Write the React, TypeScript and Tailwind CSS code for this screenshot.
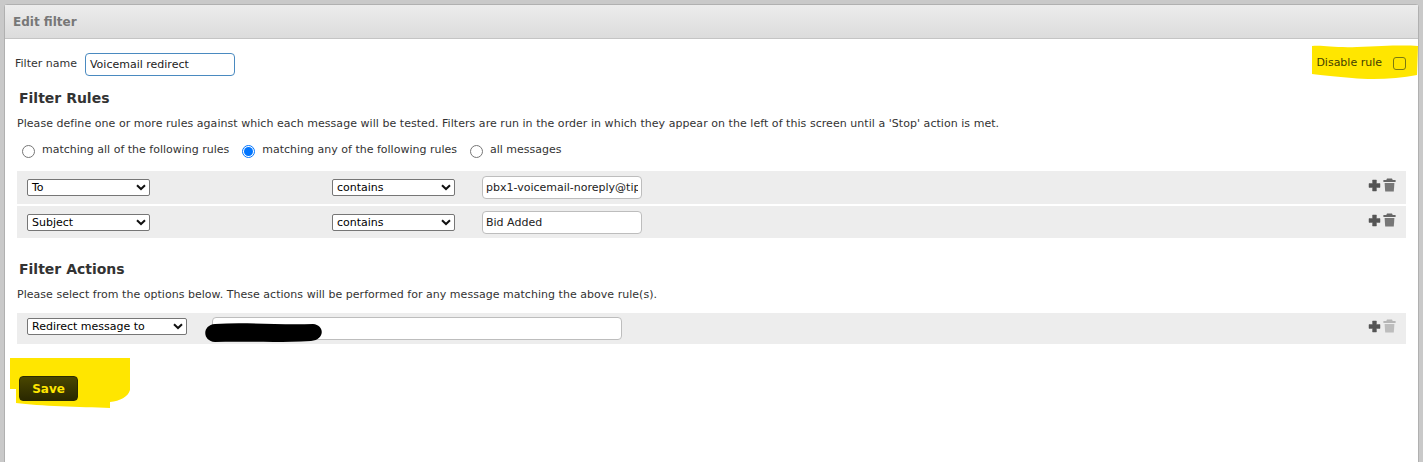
const font = { fontFamily: '"DejaVu Sans", Verdana, sans-serif' };

function Select({ value, width }: { value: string; width: string }) {
  return (
    <div className={`flex h-[17px] items-center justify-between rounded-[2px] border border-[#767676] bg-white pl-[4px] pr-[3px] text-[11px] leading-none text-black ${width}`}>
      <span>{value}</span>
      <svg width="10" height="7" viewBox="0 0 10 7">
        <path d="M1 1.2 L5 5 L9 1.2" fill="none" stroke="#111" strokeWidth="2" />
      </svg>
    </div>
  );
}

function TextBox({ value, width }: { value?: string; width: string }) {
  return (
    <div className={`flex h-[23px] items-center rounded-[4px] border border-[#bdbdbd] bg-white pl-[3px] pr-[3px] pt-[2px] text-[11px] text-[#222] ${width}`}>
      <span className="block w-full overflow-hidden whitespace-nowrap">{value}</span>
    </div>
  );
}

function RowIcons({ faded }: { faded?: boolean }) {
  return (
    <div className="-mt-[5px] flex items-end">
      <svg width="13" height="13" viewBox="0 0 13 13">
        <path d="M4.6 1h3.8v3.6H12v3.8H8.4V12H4.6V8.4H1V4.6h3.6z" fill="#555" stroke="#555" strokeWidth="0.5" strokeLinejoin="round" />
      </svg>
      <svg width="13" height="14" viewBox="0 0 13 14" className={faded ? "ml-[2px] opacity-40" : "ml-[2px]"}>
        <path d="M4 0.5h5l.7 1.6H12.6v1.8H.4V2.1h2.9z" fill="#666" />
        <path d="M1.6 5h9.8l-.6 8.6H2.2z" fill="#777" />
      </svg>
    </div>
  );
}

function Radio({ checked }: { checked?: boolean }) {
  return (
    <span className={`mt-[3px] flex h-[13px] w-[13px] items-center justify-center rounded-full border bg-white ${checked ? "border-[#0075ff]" : "border-[#767676]"}`}>
      {checked && <span className="h-[9px] w-[9px] rounded-full bg-[#0075ff]" />}
    </span>
  );
}

export default function App() {
  return (
    <div className="h-[462px] overflow-hidden bg-[#c9c9c9] px-[4px] pt-[4px]" style={font}>
      <div className="relative h-[470px] rounded-t-[3px] border border-[#b0b0b0] bg-white">
        <div className="flex h-[34px] items-center border-b border-[#c4c4c4] bg-gradient-to-b from-[#ececec] to-[#dcdcdc] pl-[8px] text-[12px] font-bold text-[#777]">
          Edit filter
        </div>

        {/* marker highlights from the screenshot */}
        <svg className="absolute left-[1307px] top-[40px]" width="106" height="36" viewBox="0 0 106 36">
          <path d="M0 1 C 12 0, 22 3, 45 2 C 70 1, 90 0, 106 1 L 105 30 C 85 34, 60 35, 40 33 C 25 32, 10 30, 0 29 Z" fill="#ffe600" />
        </svg>
        <svg className="absolute left-[5px] top-[352px]" width="122" height="52" viewBox="0 0 122 52">
          <path d="M0 1 L120 1 L120 33 C 118 40, 110 44, 100 45 L100 51 C 70 50, 30 49, 6 46 L6 32 L0 32 Z" fill="#ffe600" />
        </svg>

        <div className="relative flex h-[51px] items-start justify-between pl-[10px] pr-[12px] pt-[14px] text-[11px] text-[#333]">
          <div className="flex items-center">
            <span>Filter name</span>
            <div className="ml-[8px] flex h-[23px] w-[150px] items-center rounded-[4px] border border-[#4a8ac0] bg-white px-[4px] pt-[2px] text-[11px] text-[#222]">
              Voicemail redirect
            </div>
          </div>
          <div className="-mt-[1px] flex h-[23px] items-center text-[#444000]">
            <span>Disable rule</span>
            <span className="ml-[11px] h-[13px] w-[13px] rounded-[3px] border border-[#7a7a10]" />
          </div>
        </div>

        <div className="relative px-[12px]">
          <h2 className="pl-[2px] text-[14px] font-bold leading-[17px] text-[#333]">Filter Rules</h2>
          <p className="mt-[10px] text-[11px] leading-[14px] tracking-[0.045px] text-[#333]">
            Please define one or more rules against which each message will be tested. Filters are run in the order in which they appear on the left of this screen until a 'Stop' action is met.
          </p>
          <div className="mt-[11px] flex h-[16px] items-center pl-[5px] text-[11px] text-[#333]">
            <Radio />
            <span className="ml-[7px]">matching all of the following rules</span>
            <span className="ml-[13px]"><Radio checked /></span>
            <span className="ml-[7px]">matching any of the following rules</span>
            <span className="ml-[13px]"><Radio /></span>
            <span className="ml-[7px]">all messages</span>
          </div>

          <div className="mt-[13px] flex flex-col gap-[2px]">
            <div className="flex h-[33px] items-center bg-[#ededed] pl-[10px] pr-[10px]">
              <Select value="To" width="w-[123px]" />
              <div className="ml-[182px]"><Select value="contains" width="w-[123px]" /></div>
              <div className="ml-[27px]"><TextBox value="pbx1-voicemail-noreply@tip" width="w-[160px]" /></div>
              <div className="ml-auto"><RowIcons /></div>
            </div>
            <div className="flex h-[32px] items-center bg-[#ededed] pl-[10px] pr-[10px]">
              <Select value="Subject" width="w-[123px]" />
              <div className="ml-[182px]"><Select value="contains" width="w-[123px]" /></div>
              <div className="ml-[27px]"><TextBox value="Bid Added" width="w-[160px]" /></div>
              <div className="ml-auto"><RowIcons /></div>
            </div>
          </div>

          <h2 className="mt-[23px] pl-[2px] text-[14px] font-bold leading-[17px] text-[#333]">Filter Actions</h2>
          <p className="mt-[10px] text-[11px] leading-[14px] tracking-[0.03px] text-[#333]">
            Please select from the options below. These actions will be performed for any message matching the above rule(s).
          </p>

          <div className="mt-[11px] flex h-[31px] items-center bg-[#ededed] pl-[10px] pr-[10px]">
            <div className="-mt-[4px]"><Select value="Redirect message to" width="w-[160px]" /></div>
            <div className="relative ml-[25px]">
              <TextBox width="w-[410px]" />
              <svg className="absolute -left-[7px] top-[5px]" width="118" height="22" viewBox="0 0 118 22">
                <path d="M10 2 C 40 0, 70 3, 108 2 C 120 3, 120 18, 106 19 C 70 21, 40 19, 10 20 C -3 19, -3 3, 10 2 Z" fill="#000" />
              </svg>
            </div>
            <div className="ml-auto"><RowIcons faded /></div>
          </div>

          <button className="mt-[32px] ml-[2px] block h-[25px] w-[59px] rounded-[4px] border border-[#2b2b00] bg-gradient-to-b from-[#4a4700] to-[#2a2800] text-[12px] font-bold text-[#ffe600]">
            Save
          </button>
        </div>
      </div>
    </div>
  );
}
